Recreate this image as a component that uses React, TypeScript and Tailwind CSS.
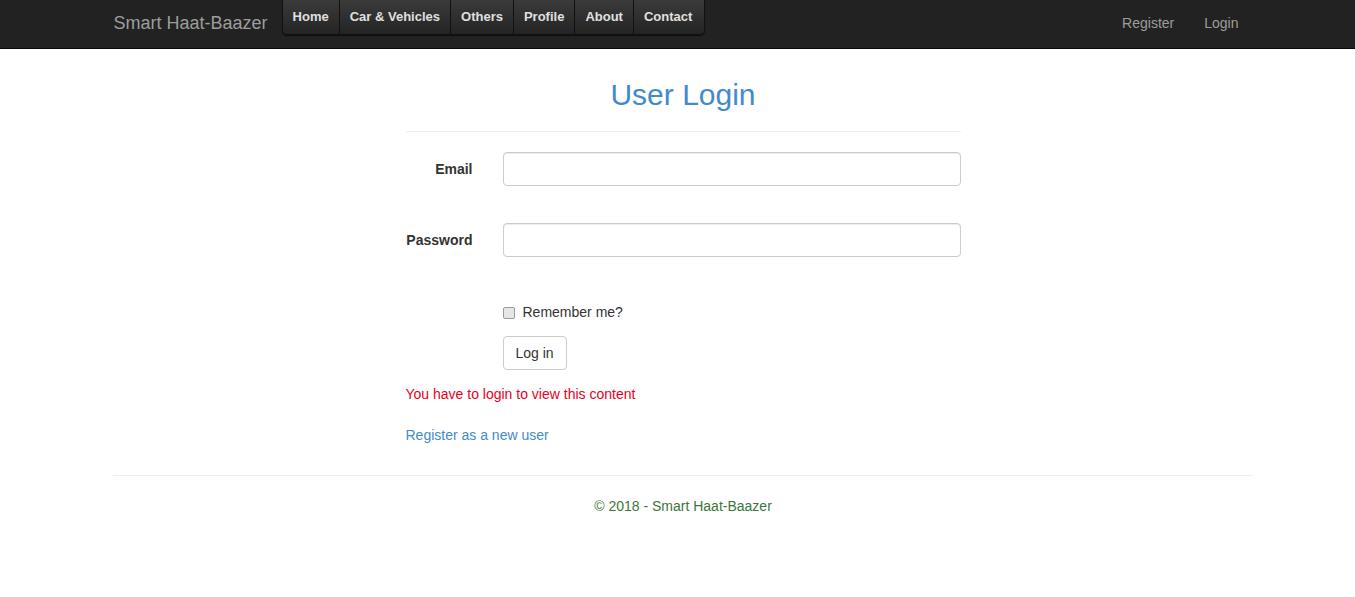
import React from 'react';

const menuItems = ['Home', 'Car & Vehicles', 'Others', 'Profile', 'About', 'Contact'];

function TopNav() {
  return (
    <nav className="h-[49px] bg-[#222] border-b border-[#080808]">
      <div className="mx-auto w-[1170px] px-[15px] h-full flex">
        <a className="pl-[6px] pr-[14px] pt-[13px] text-[18px] leading-[20px] text-[#9d9d9d]">
          Smart Haat-Baazer
        </a>
        <ul className="flex h-[35px] rounded-b-[5px] border border-t-0 border-[#111] bg-gradient-to-b from-[#3b3b3b] to-[#242424] shadow-[0_1px_1px_rgba(0,0,0,0.6)] overflow-hidden">
          {menuItems.map((item, i) => (
            <li
              key={item}
              className={`px-[10px] pt-[9px] text-[13px] font-bold text-[#e0e0e0] leading-[16px] ${i > 0 ? 'border-l border-[#111]' : ''} ${i === menuItems.length - 1 ? 'pr-[12px]' : ''}`}
            >
              {item}
            </li>
          ))}
        </ul>
        <ul className="ml-auto mr-[-6px] flex text-[14px] text-[#9d9d9d] leading-[20px]">
          <li className="px-[15px] pt-[13px]">Register</li>
          <li className="px-[15px] pt-[13px]">Login</li>
        </ul>
      </div>
    </nav>
  );
}

function LoginForm() {
  return (
    <div className="mx-auto w-[555px] pt-[29px]">
      <h2 className="text-center text-[30px] leading-[33px] text-[#428bca]">User Login</h2>
      <hr className="mt-[20px] border-t border-[#eee]" />
      <div className="mt-[20px] flex items-center">
        <label className="w-[67px] text-right text-[14px] font-bold text-[#333]">Email</label>
        <input className="ml-[30px] h-[34px] flex-1 rounded-[4px] border border-[#ccc] shadow-[inset_0_1px_1px_rgba(0,0,0,0.075)]" />
      </div>
      <div className="mt-[37px] flex items-center">
        <label className="w-[67px] text-right text-[14px] font-bold text-[#333]">Password</label>
        <input type="password" className="ml-[30px] h-[34px] flex-1 rounded-[4px] border border-[#ccc] shadow-[inset_0_1px_1px_rgba(0,0,0,0.075)]" />
      </div>
      <div className="mt-[45px] ml-[97px] flex items-center gap-[8px] text-[14px] text-[#333]">
        <span className="h-[12px] w-[12px] rounded-[2px] border border-[#999] bg-[#e6e6e6]" />
        <span>Remember me?</span>
      </div>
      <button className="mt-[13px] ml-[97px] h-[34px] w-[64px] rounded-[4px] border border-[#ccc] bg-white text-[14px] text-[#333]">
        Log in
      </button>
      <p className="mt-[14px] text-[14px] leading-[20px] text-[#e8001c]">You have to login to view this content</p>
      <p className="mt-[21px] text-[14px] leading-[20px] text-[#428bca]">Register as a new user</p>
    </div>
  );
}

export default function App() {
  return (
    <div className="min-h-[597px] bg-white font-['Liberation_Sans',Arial,sans-serif]">
      <TopNav />
      <div className="pl-[11px]">
        <LoginForm />
        <footer className="mx-auto w-[1140px] mt-[30px]">
          <hr className="border-t border-[#eee]" />
          <p className="mt-[20px] text-center text-[14px] leading-[20px] text-[#3c763d]">© 2018 - Smart Haat-Baazer</p>
        </footer>
      </div>
    </div>
  );
}
